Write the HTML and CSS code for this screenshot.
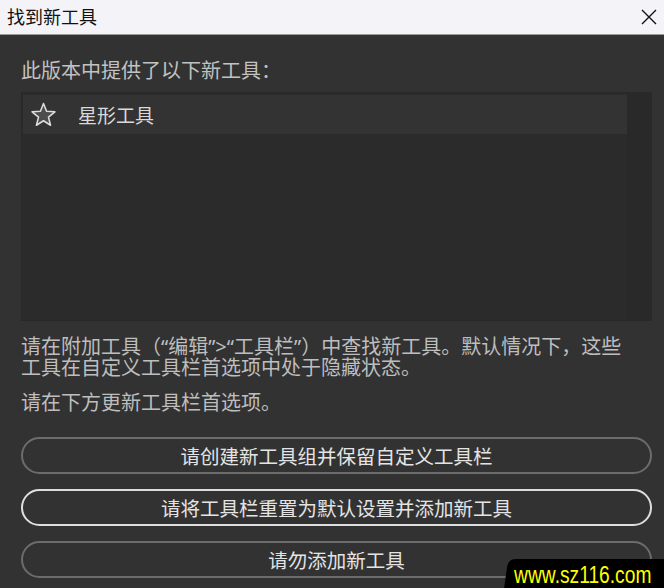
FILE: index.html
```html
<!DOCTYPE html>
<html lang="zh-CN">
<head>
    <meta charset="UTF-8">
    <meta name="viewport" content="width=device-width, initial-scale=1.0">
    <title>找到新工具</title>
    <link rel="stylesheet" href="styles.css">
</head>
<body>
    <div class="dialog">
        <header class="titlebar">
            <h1>找到新工具</h1>
            <button class="close" aria-label="关闭">
                <svg width="16" height="16" viewBox="0 0 16 16">
                    <path d="M1 1 L15 15 M15 1 L1 15" stroke="#111" stroke-width="1.4" fill="none"/>
                </svg>
            </button>
        </header>

        <main class="content">
            <p class="label">此版本中提供了以下新工具：</p>

            <div class="tool-list">
                <ul class="tool-items">
                    <li class="tool-item">
                        <svg class="star" width="25" height="25" viewBox="0 0 24 24">
                            <path d="M12 1.5 L14.94 8.96 L22.94 9.45 L16.76 14.55 L18.76 22.3 L12 18 L5.24 22.3 L7.24 14.55 L1.06 9.45 L9.06 8.96 Z" fill="#4d4d4d" stroke="#dcdcdc" stroke-width="1.5" stroke-linejoin="round"/>
                        </svg>
                        <span>星形工具</span>
                    </li>
                </ul>
                <div class="scroll-track"></div>
            </div>

            <p class="info">请在附加工具（“编辑”&gt;“工具栏”）中查找新工具。默认情况下，这些工具在自定义工具栏首选项中处于隐藏状态。</p>
            <p class="info">请在下方更新工具栏首选项。</p>

            <div class="actions">
                <button class="pill">请创建新工具组并保留自定义工具栏</button>
                <button class="pill pill-default">请将工具栏重置为默认设置并添加新工具</button>
                <button class="pill">请勿添加新工具</button>
            </div>
        </main>

        <div class="watermark"><span>www.sz116.com</span></div>
    </div>
</body>
</html>
```

FILE: styles.css
```css
html, body {
    margin: 0;
    padding: 0;
    height: 100%;
}

body {
    font-family: "Noto Sans", "Noto Sans CJK SC", sans-serif;
    background-color: #323232;
    overflow: hidden;
}

.dialog {
    position: relative;
    height: 100%;
}

.titlebar {
    height: 34px;
    background-color: #f4f4f8;
    border-bottom: 1px solid #9a9a9a;
    display: flex;
    align-items: center;
    justify-content: space-between;
    padding: 0 7px;
}

.titlebar h1 {
    margin: 0;
    font-size: 18px;
    font-weight: normal;
    color: #111;
    line-height: 30px;
}

.close {
    background: none;
    border: none;
    padding: 0;
    width: 16px;
    height: 16px;
    display: flex;
}

.content {
    padding: 24px 12px 0 21px;
}

.label {
    margin: 0;
    font-size: 20px;
    line-height: 23px;
    color: #c2c2c2;
}

.tool-list {
    margin-top: 10px;
    height: 227px;
    background-color: #2b2b2b;
    border: 1px solid #282828;
    display: grid;
    grid-template-columns: 1fr 24px;
}

.tool-items {
    list-style: none;
    margin: 0;
    padding: 2px 0 0 1px;
}

.tool-item {
    height: 39px;
    background-color: #333333;
    display: flex;
    align-items: center;
    padding-left: 8px;
    gap: 22px;
}

.tool-item span {
    font-size: 19px;
    color: #dadada;
}

.scroll-track {
    background-color: #292929;
}

.info {
    margin: 15px 0 0;
    font-size: 20px;
    line-height: 21px;
    color: #bebebe;
    max-width: 612px;
}

.info + .info {
    margin-top: 14px;
}

.actions {
    margin-top: 24px;
    display: flex;
    flex-direction: column;
    gap: 15px;
}

.pill {
    height: 37px;
    border: 2px solid #6c6c6c;
    border-radius: 19px;
    background-color: transparent;
    color: #e4e4e4;
    font-family: inherit;
    font-size: 19.5px;
    padding: 0;
    cursor: pointer;
}

.pill-default {
    border-color: #dedede;
}

.watermark {
    position: absolute;
    right: -8px;
    bottom: -2px;
    width: 166px;
    height: 31px;
    background-color: #000;
    border-radius: 7px 7px 0 0;
    transform: skewX(-8deg);
    display: flex;
    align-items: center;
    justify-content: center;
}

.watermark span {
    transform: skewX(8deg) scaleX(0.8);
    font-family: "Liberation Sans", sans-serif;
    font-size: 24px;
    color: #ffff00;
    margin-right: 12px;
    white-space: nowrap;
}
```
